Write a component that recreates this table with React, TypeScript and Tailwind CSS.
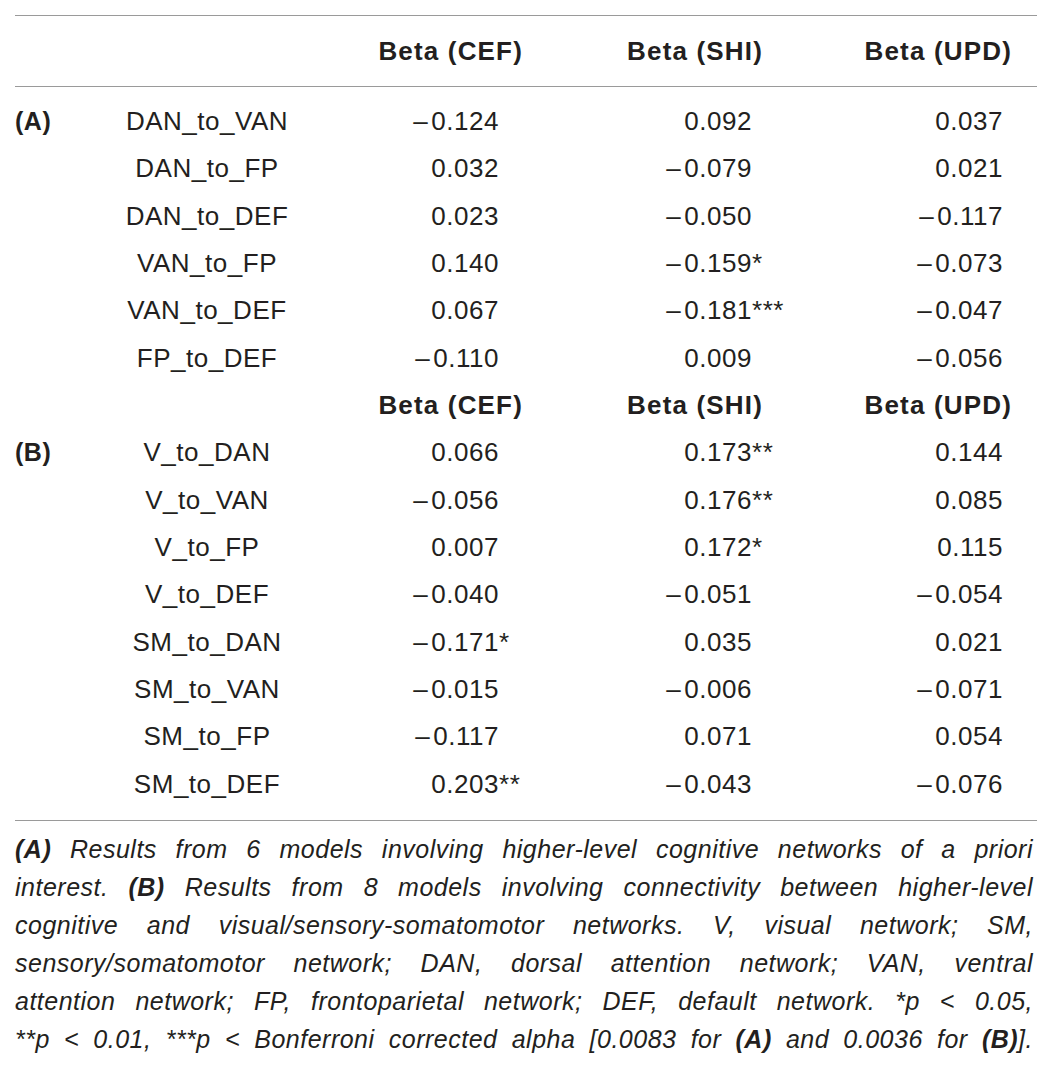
const rowsA = [
  ["DAN_to_VAN", ["–0.124", ""], ["0.092", ""], ["0.037", ""]],
  ["DAN_to_FP", ["0.032", ""], ["–0.079", ""], ["0.021", ""]],
  ["DAN_to_DEF", ["0.023", ""], ["–0.050", ""], ["–0.117", ""]],
  ["VAN_to_FP", ["0.140", ""], ["–0.159", "*"], ["–0.073", ""]],
  ["VAN_to_DEF", ["0.067", ""], ["–0.181", "***"], ["–0.047", ""]],
  ["FP_to_DEF", ["–0.110", ""], ["0.009", ""], ["–0.056", ""]],
] as const;

const rowsB = [
  ["V_to_DAN", ["0.066", ""], ["0.173", "**"], ["0.144", ""]],
  ["V_to_VAN", ["–0.056", ""], ["0.176", "**"], ["0.085", ""]],
  ["V_to_FP", ["0.007", ""], ["0.172", "*"], ["0.115", ""]],
  ["V_to_DEF", ["–0.040", ""], ["–0.051", ""], ["–0.054", ""]],
  ["SM_to_DAN", ["–0.171", "*"], ["0.035", ""], ["0.021", ""]],
  ["SM_to_VAN", ["–0.015", ""], ["–0.006", ""], ["–0.071", ""]],
  ["SM_to_FP", ["–0.117", ""], ["0.071", ""], ["0.054", ""]],
  ["SM_to_DEF", ["0.203", "**"], ["–0.043", ""], ["–0.076", ""]],
] as const;

const grid = "grid grid-cols-[85px_214px_209px_240px_249px] items-center";
const pads = ["pr-[24px]", "pr-[11px]", "pr-[9px]"];

function Val({ v, stars, pad }: { v: string; stars: string; pad: string }) {
  // negative sign is a long dash in the source, so give it a little room
  const neg = v.startsWith("–");
  return (
    <div className={`flex justify-end ${pad}`}>
      <span>
        {neg && <span className="mr-[3px]">–</span>}
        {neg ? v.slice(1) : v}
        <span className="inline-block w-0 whitespace-nowrap">{stars}</span>
      </span>
    </div>
  );
}

function Row({ group, label, vals }: { group?: string; label: string; vals: readonly (readonly [string, string])[] }) {
  return (
    <div className={`${grid} h-[47.33px]`}>
      <div className="font-bold text-[25px]">{group}</div>
      <div className="text-center">{label}</div>
      {vals.map((c, i) => (
        <Val key={i} v={c[0]} stars={c[1]} pad={pads[i]} />
      ))}
    </div>
  );
}

function Head({ className = "" }: { className?: string }) {
  return (
    <div className={`${grid} font-bold tracking-[0.045em] text-[26px] ${className}`}>
      <div />
      <div />
      <div className="text-right">Beta (CEF)</div>
      <div className="text-right">Beta (SHI)</div>
      <div className="text-right">Beta (UPD)</div>
    </div>
  );
}

const caption: { t: string; b?: boolean }[][] = [
  [{ t: "(A)", b: true }, { t: " Results from 6 models involving higher-level cognitive networks of a priori" }],
  [{ t: "interest. " }, { t: "(B)", b: true }, { t: " Results from 8 models involving connectivity between higher-level" }],
  [{ t: "cognitive and visual/sensory-somatomotor networks. V, visual network; SM," }],
  [{ t: "sensory/somatomotor network; DAN, dorsal attention network; VAN, ventral" }],
  [{ t: "attention network; FP, frontoparietal network; DEF, default network. *p < 0.05," }],
  [
    { t: "**p < 0.01, ***p < Bonferroni corrected alpha [0.0083 for " },
    { t: "(A)", b: true },
    { t: " and 0.0036 for " },
    { t: "(B)", b: true },
    { t: "]." },
  ],
];

export default function App() {
  return (
    <div className="w-[1059px] h-[1066px] bg-white pl-[15px] pr-[22px] pt-[15px] text-[#231f20] text-[26px] font-['Liberation_Sans',Arial,sans-serif] tracking-[0.02em]">
      <div className="border-t border-b border-[#9a9a9a]">
        <Head className="h-[70px]" />
      </div>
      <div className="pt-[11px] pb-[12px] border-b border-[#9a9a9a]">
        {rowsA.map((r, i) => (
          <Row key={r[0]} group={i === 0 ? "(A)" : undefined} label={r[0]} vals={[r[1], r[2], r[3]]} />
        ))}
        <Head className="h-[47.33px]" />
        {rowsB.map((r, i) => (
          <Row key={r[0]} group={i === 0 ? "(B)" : undefined} label={r[0]} vals={[r[1], r[2], r[3]]} />
        ))}
      </div>
      <div className="mt-[9px] pr-[4px] italic text-[25px] tracking-[0.02em]">
        {caption.map((line, i) => (
          <div key={i} className="h-[38px] leading-[38px] text-justify [text-align-last:justify] whitespace-nowrap">
            {line.map((s, j) => (
              <span key={j} className={s.b ? "font-bold" : ""}>
                {s.t}
              </span>
            ))}
          </div>
        ))}
      </div>
    </div>
  );
}
